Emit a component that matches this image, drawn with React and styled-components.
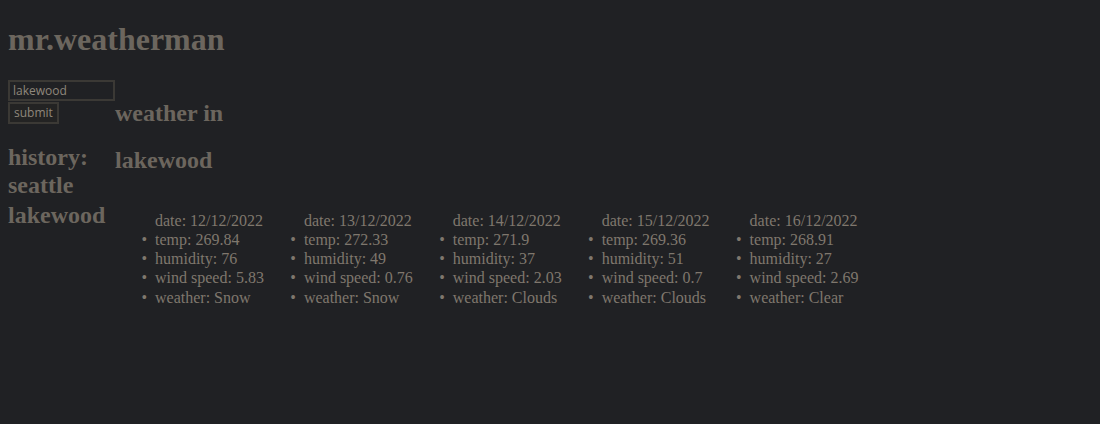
import React from "react";
import styled, { createGlobalStyle } from "styled-components";

const Global = createGlobalStyle`
  html, body { background: #202124; }
  body {
    margin: 8px;
    font-family: "Liberation Serif", "Times New Roman", serif;
    color: #7f776d;
  }
`;

const Title = styled.h1`
  font-size: 32px;
  font-weight: bold;
  line-height: 36.8px;
  margin: 13.44px 0 21.44px;
  color: #6c665e;
`;

const Row = styled.div`
  display: flex;
  align-items: flex-start;
`;

const Side = styled.div`
  width: 107px;
  flex-shrink: 0;
`;

const Form = styled.form`
  display: flex;
  flex-direction: column;
  align-items: flex-start;
  gap: 1px;
  margin: 0;
`;

const Input = styled.input`
  box-sizing: border-box;
  width: 107px;
  height: 21px;
  padding: 1px 3px;
  border: 2px solid #3b3935;
  background: #202124;
  color: #8f877c;
  font-family: "Open Sans", "Noto Sans", sans-serif;
  font-size: 12px;
  outline: none;
`;

const Button = styled.button`
  box-sizing: border-box;
  height: 22px;
  padding: 0 4px;
  border: 2px solid #3b3935;
  background: #232323;
  color: #8f877c;
  font-family: "Open Sans", "Noto Sans", sans-serif;
  font-size: 12px;
`;

const Heading = styled.h2`
  font-size: 24px;
  font-weight: bold;
  margin: ${(p) => (p.$flush ? "19.92px 0 0" : "19.92px 0")};
  color: #6c665e;
  line-height: 27.6px;
`;

const HistoryItem = styled.div`
  font-size: 24px;
  font-weight: bold;
  line-height: 29.6px;
  color: #6c665e;
`;

const Main = styled.div`
  display: block;
`;

const Forecast = styled.div`
  display: flex;
`;

const Day = styled.ul`
  margin: 16px 0;
  padding-left: 40px;
  font-size: 16px;
  line-height: 19.3px;
  color: #7f776d;
`;

const DateLine = styled.div``;

const Item = styled.li`
  &::marker {
    content: "\\2022\\2002";
    color: #7f776d;
    font-size: 16px;
  }
`;

const days = [
  { date: "12/12/2022", temp: "269.84", humidity: "76", wind: "5.83", weather: "Snow" },
  { date: "13/12/2022", temp: "272.33", humidity: "49", wind: "0.76", weather: "Snow" },
  { date: "14/12/2022", temp: "271.9", humidity: "37", wind: "2.03", weather: "Clouds" },
  { date: "15/12/2022", temp: "269.36", humidity: "51", wind: "0.7", weather: "Clouds" },
  { date: "16/12/2022", temp: "268.91", humidity: "27", wind: "2.69", weather: "Clear" },
];

export default function App() {
  return (
    <>
      <Global />
      <Title>mr.weatherman</Title>
      <Row>
        <Side>
          <Form onSubmit={(e) => e.preventDefault()}>
            <Input defaultValue="lakewood" />
            <Button type="submit">submit</Button>
          </Form>
          <Heading $flush>history:</Heading>
          <HistoryItem>seattle</HistoryItem>
          <HistoryItem>lakewood</HistoryItem>
        </Side>
        <Main>
          <Heading>weather in</Heading>
          <Heading>lakewood</Heading>
          <Forecast>
            {days.map((d) => (
              <Day key={d.date}>
                <DateLine>date: {d.date}</DateLine>
                <Item>temp: {d.temp}</Item>
                <Item>humidity: {d.humidity}</Item>
                <Item>wind speed: {d.wind}</Item>
                <Item>weather: {d.weather}</Item>
              </Day>
            ))}
          </Forecast>
        </Main>
      </Row>
    </>
  );
}
